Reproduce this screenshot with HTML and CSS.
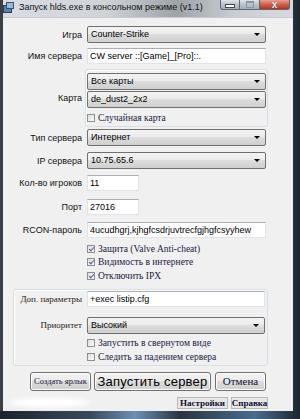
FILE: index.html
```html
<!DOCTYPE html>
<html>
<head>
<meta charset="utf-8">
<link rel="stylesheet" href="styles.css">
</head>
<body>
<div class="screen">
  <div class="window">
    <div class="titlebar">
      <svg class="appicon" width="11" height="11" viewBox="0 0 11 11">
        <rect x="0.5" y="3.5" width="8" height="7" fill="#5a7fb0" stroke="#2a3f60"/>
        <rect x="3.5" y="0.5" width="7" height="6" fill="#9ab8d8" stroke="#3a5070"/>
      </svg>
      <span class="title">Запуск hlds.exe в консольном режиме (v1.1)</span>
      <div class="caption">
        <div class="cbtn cmin"><span class="minbar"></span></div>
        <div class="cbtn cmax"><span class="maxbox"></span></div>
        <div class="cbtn cclose"><span class="x">x</span></div>
      </div>
    </div>
    <div class="client">
      <div class="row r1">
        <div class="lbl">Игра</div>
        <div class="combo w179">Counter-Strike<span class="arrow"></span></div>
      </div>
      <div class="row r2">
        <div class="lbl">Имя сервера</div>
        <div class="text w179">CW server ::[Game]_[Pro]::.</div>
      </div>
      <div class="maprow">
        <div class="lbl maplbl">Карта</div>
        <div class="mappanel">
          <div class="combo w179">Все карты<span class="arrow"></span></div>
          <div class="combo w179 c2">de_dust2_2x2<span class="arrow"></span></div>
          <div class="check c3"><span class="box"></span><span class="clbl">Случайная карта</span></div>
        </div>
      </div>
      <div class="row r4">
        <div class="lbl">Тип сервера</div>
        <div class="combo w179">Интернет<span class="arrow"></span></div>
      </div>
      <div class="row r5">
        <div class="lbl">IP сервера</div>
        <div class="combo w179">10.75.65.6<span class="arrow"></span></div>
      </div>
      <div class="row r6">
        <div class="lbl">Кол-во игроков</div>
        <div class="text w52">11</div>
      </div>
      <div class="row r7">
        <div class="lbl">Порт</div>
        <div class="text w52">27016</div>
      </div>
      <div class="row r8">
        <div class="lbl">RCON-пароль</div>
        <div class="text w179 clip">4ucudhgrj,kjhgfcsdrjuvtrecfgjhgfcsyyhew</div>
      </div>
      <div class="checks">
        <div class="check"><span class="box on"></span><span class="clbl">Защита (Valve Anti-cheat)</span></div>
        <div class="check"><span class="box on"></span><span class="clbl">Видимость в интернете</span></div>
        <div class="check"><span class="box on"></span><span class="clbl">Отключить IPX</span></div>
      </div>
      <div class="group">
        <div class="row g1">
          <div class="lbl glbl serif">Доп. параметры</div>
          <div class="text w178">+exec listip.cfg</div>
        </div>
        <div class="row g2">
          <div class="lbl glbl serif">Приоритет</div>
          <div class="combo w178">Высокий<span class="arrow"></span></div>
        </div>
        <div class="gchecks">
          <div class="check"><span class="box"></span><span class="clbl">Запустить в свернутом виде</span></div>
          <div class="check"><span class="box"></span><span class="clbl">Следить за падением сервера</span></div>
        </div>
      </div>
      <div class="buttons">
        <div class="btn b1">Создать ярлык</div>
        <div class="btn b2">Запустить сервер</div>
        <div class="btn b3">Отмена</div>
      </div>
      <div class="links">
        <div class="blob"></div>
        <div class="link l1">Настройки</div>
        <div class="link l2">Справка</div>
      </div>
    </div>
  </div>
</div>
</body>
</html>
```
FILE: styles.css
```css
html, body { margin: 0; padding: 0; }
body { width: 300px; height: 419px; overflow: hidden; background: #27313c; }
.screen {
  width: 300px; height: 419px;
  background: linear-gradient(to right, #1d252e 0%, #3a4a5c 30%, #6d8fb4 45%, #2a3440 60%, #4a6c90 85%, #1d252e 100%);
}
.window {
  width: 293px; height: 411px;
  border-left: 3px solid #3b4047;
  box-sizing: border-box;
  background: #f0f0f0;
  font-family: "Liberation Sans", Arial, sans-serif;
}
.titlebar {
  height: 17px;
  position: relative;
  background: linear-gradient(to right, #d9dde1 0%, #d0d4d8 35%, #9ea3a8 60%, #c9ced3 80%, #d6dadf 100%);
  display: flex; align-items: flex-start;
}
.appicon { margin: 2px 0 0 0; }
.title { font-size: 9px; margin: 2px 0 0 5px; color: #111; white-space: nowrap; }
.caption { position: absolute; top: 0; left: 217px; display: flex; }
.cbtn { height: 10px; box-sizing: border-box; border: 1px solid #5c6670; border-top: none; display: flex; align-items: center; justify-content: center; }
.cmin { width: 20px; border-radius: 0 0 0 3px; background: linear-gradient(#dfe4e9, #b9c1ca 50%, #a6b0bb); }
.cmax { width: 20px; border-left: none; background: linear-gradient(#dfe4e9, #b9c1ca 50%, #a6b0bb); }
.cclose { width: 30px; border-left: none; border-radius: 0 0 3px 0; background: linear-gradient(#e6a090, #d0604c 50%, #b8301e); }
.minbar { width: 8px; height: 2px; background: #fff; border: 1px solid #40484f; margin-top: 3px; }
.maxbox { width: 6px; height: 4px; border: 1px solid #8d969f; border-top-width: 2px; }
.x { color: #fff; font: bold 10px "Liberation Sans", sans-serif; line-height: 9px; text-shadow: 0 0 1px #400; }
.client {
  height: 394px; padding-top: 8px; box-sizing: border-box;
  font-size: 9px; color: #000;
  border-top: 1px solid #c6ccd2;
}
.row { display: flex; align-items: center; }
.lbl { width: 84px; box-sizing: border-box; padding-right: 5px; text-align: right; white-space: nowrap; font-size: 9px; color: #111; }
.combo {
  height: 17px; box-sizing: border-box; position: relative;
  border: 1px solid #707070; border-radius: 2px;
  background: linear-gradient(#f3f3f3 0%, #ebebeb 45%, #dddddd 50%, #cfcfcf 100%);
  padding-left: 3px; line-height: 15px; font-size: 9px; white-space: nowrap;
}
.arrow { position: absolute; right: 5px; top: 6px; width: 0; height: 0; border-left: 3px solid transparent; border-right: 3px solid transparent; border-top: 3px solid #000; }
.text {
  height: 16px; box-sizing: border-box; background: #fff;
  border: 1px solid #e2e3ea; border-top-color: #abadb3;
  padding-left: 2px; line-height: 14px; font-size: 9px; white-space: nowrap;
}
.clip { overflow: hidden; }
.w179 { width: 179px; }
.w178 { width: 178px; }
.w52 { width: 52px; }
.r1 { margin-top: 0; }
.r2 { margin-top: 5px; }
.maprow { display: flex; align-items: center; margin-top: 5px; }
.maplbl { width: 82px; padding-right: 3px; }
.mappanel {
  width: 183px; height: 58px; box-sizing: border-box;
  border: 1px solid #d5dfe5; border-radius: 3px; box-shadow: inset 1px 1px 0 #fff;
  padding: 3px 0 0 1px;
}
.c2 { margin-top: 1px; }
.c3 { margin-top: 3px; }
.r4 { margin-top: 2px; }
.r5 { margin-top: 6px; }
.r6 { margin-top: 6px; }
.r7 { margin-top: 8px; }
.r8 { margin-top: 7px; }
.checks { margin-top: 4px; padding-left: 84px; }
.check { display: flex; align-items: center; height: 13.5px; }
.box {
  width: 8px; height: 8px; box-sizing: border-box; border: 1px solid #8e8f8f;
  background: linear-gradient(135deg, #dcdcdc, #fbfbfb); position: relative; flex: none;
}
.box.on::after {
  content: ""; position: absolute; left: 2px; top: 0px; width: 2px; height: 4px;
  border: solid #4a5f97; border-width: 0 1.5px 1.5px 0; transform: rotate(40deg);
}
.clbl { margin-left: 3px; font-family: "Liberation Serif", "Times New Roman", serif; font-size: 9.5px; color: #1a1a40; white-space: nowrap; }
.group {
  margin: 6px 0 0 10px; width: 255px; height: 77px; box-sizing: border-box;
  border: 1px solid #d5dfe5; border-radius: 3px; box-shadow: inset 1px 1px 0 #fff;
  padding-top: 1px;
}
.glbl { width: 73px; }
.serif { font-family: "Liberation Serif", "Times New Roman", serif; color: #2a1a10; font-size: 9px; }
.g2 { margin-top: 10px; }
.gchecks { margin-top: 3px; padding-left: 73px; }
.buttons { display: flex; margin-top: 6px; padding-left: 27px; gap: 3px; }
.btn {
  height: 19px; box-sizing: border-box; border: 1px solid #707070; border-radius: 3px;
  background: linear-gradient(#f2f2f2 0%, #ebebeb 45%, #dddddd 50%, #cfcfcf 100%);
  display: flex; align-items: center; justify-content: center; white-space: nowrap;
  box-shadow: inset 0 0 0 1px #fcfcfc;
}
.b1 { width: 61px; font-family: "Liberation Serif", serif; font-size: 8.5px; color: #1a1a40; }
.b2 { width: 117px; font-size: 13px; letter-spacing: 0.2px; }
.b3 { width: 51px; margin-left: 1px; font-family: "Liberation Serif", serif; font-size: 11px; color: #101030; }
.links { display: flex; align-items: center; margin-top: 6px; height: 12px; }
.blob { width: 80px; height: 9px; margin-left: 7px; background: #fff; border-radius: 50%; filter: blur(2px); }
.link {
  height: 12px; box-sizing: border-box; border: 1px solid #b9b9b9; background: #e6e6e6;
  font-family: "Liberation Serif", serif; font-weight: bold; font-size: 9px; color: #101030;
  display: flex; align-items: center; justify-content: center; white-space: nowrap;
}
.l1 { width: 51px; margin-left: auto; }
.l2 { width: 37px; margin-left: 3px; margin-right: 25px; }
```
